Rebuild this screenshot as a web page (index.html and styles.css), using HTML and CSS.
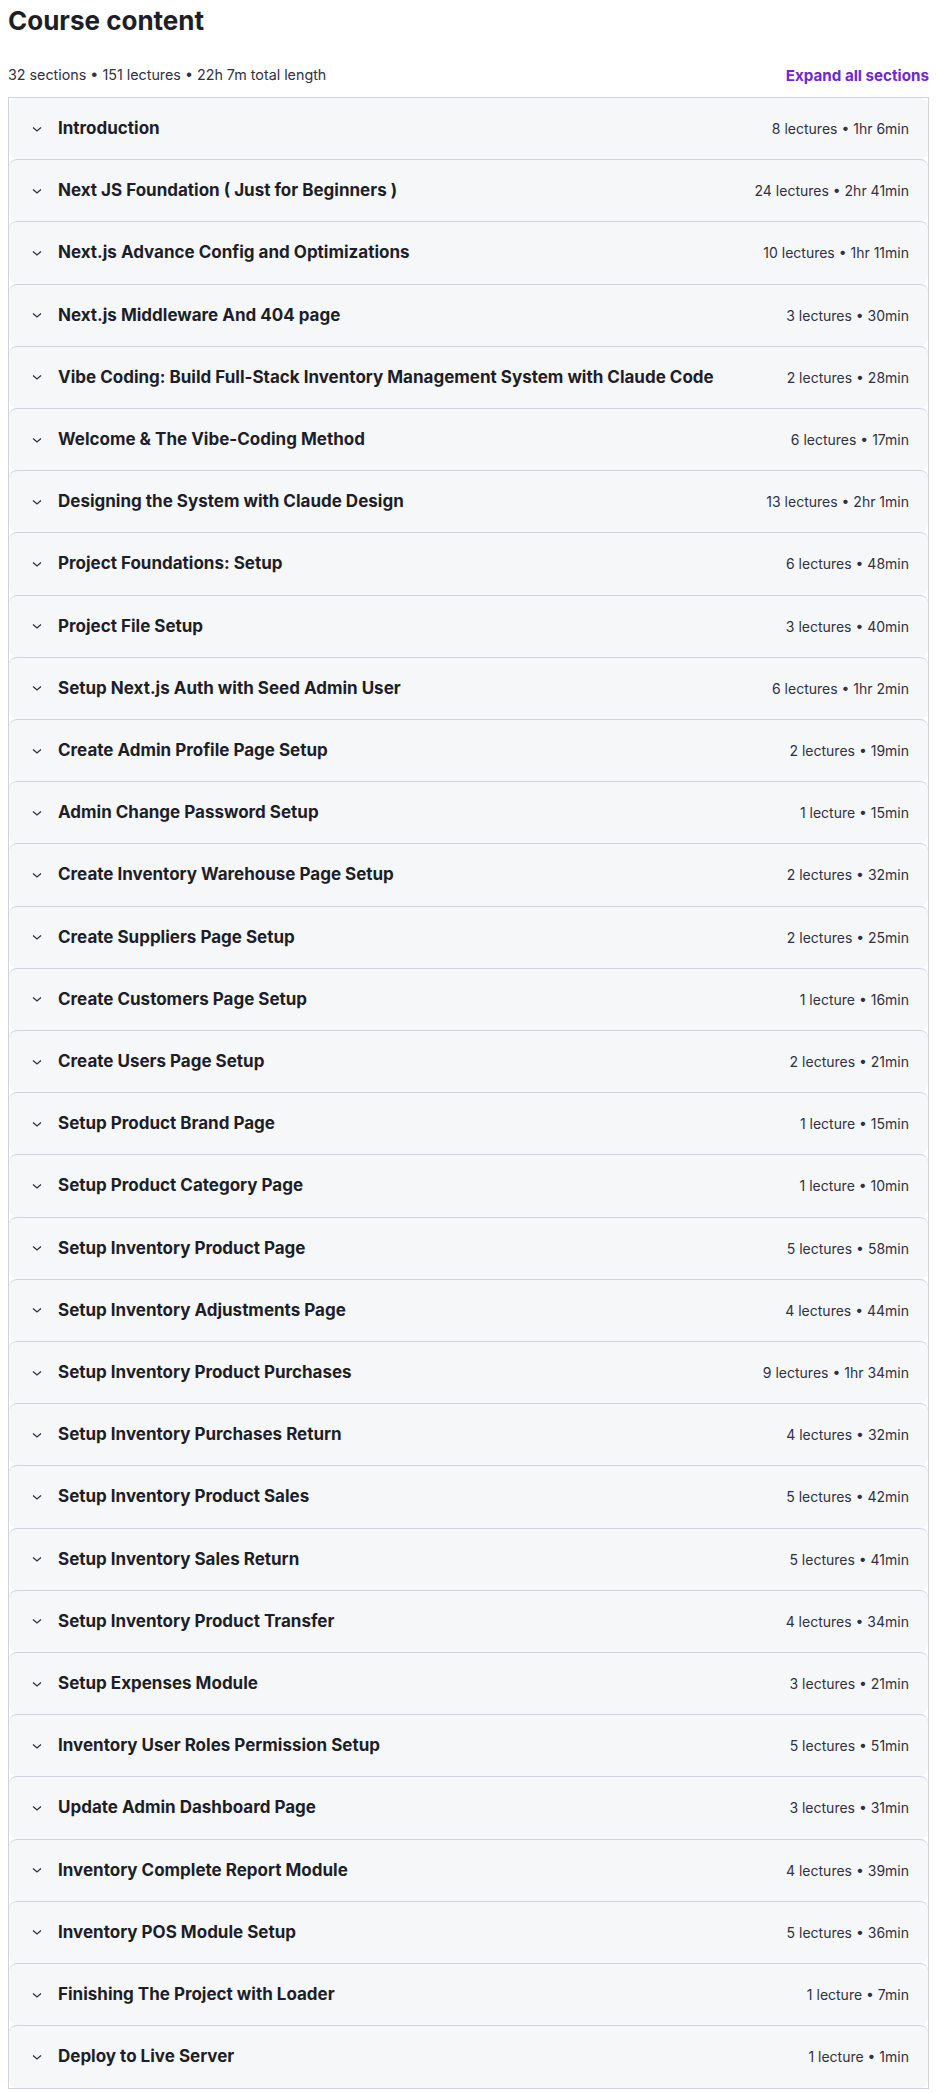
FILE: index.html
```html
<!DOCTYPE html>
<html>
<head>
    <title>Course content</title>
    <link rel="stylesheet" href="styles.css">
</head>
<body>
    <h2 class="heading">Course content</h2>
    <div class="meta-bar">
        <span class="meta">32 sections • 151 lectures • 22h 7m total length</span>
        <button class="expand-btn">Expand all sections</button>
    </div>

    <div class="sections" id="sections"></div>

    <script>
        const sections = [
            ['Introduction', '8 lectures • 1hr 6min'],
            ['Next JS Foundation ( Just for Beginners )', '24 lectures • 2hr 41min'],
            ['Next.js Advance Config and Optimizations', '10 lectures • 1hr 11min'],
            ['Next.js Middleware And 404 page', '3 lectures • 30min'],
            ['Vibe Coding: Build Full-Stack Inventory Management System with Claude Code', '2 lectures • 28min'],
            ['Welcome & The Vibe-Coding Method', '6 lectures • 17min'],
            ['Designing the System with Claude Design', '13 lectures • 2hr 1min'],
            ['Project Foundations: Setup', '6 lectures • 48min'],
            ['Project File Setup', '3 lectures • 40min'],
            ['Setup Next.js Auth with Seed Admin User', '6 lectures • 1hr 2min'],
            ['Create Admin Profile Page Setup', '2 lectures • 19min'],
            ['Admin Change Password Setup', '1 lecture • 15min'],
            ['Create Inventory Warehouse Page Setup', '2 lectures • 32min'],
            ['Create Suppliers Page Setup', '2 lectures • 25min'],
            ['Create Customers Page Setup', '1 lecture • 16min'],
            ['Create Users Page Setup', '2 lectures • 21min'],
            ['Setup Product Brand Page', '1 lecture • 15min'],
            ['Setup Product Category Page', '1 lecture • 10min'],
            ['Setup Inventory Product Page', '5 lectures • 58min'],
            ['Setup Inventory Adjustments Page', '4 lectures • 44min'],
            ['Setup Inventory Product Purchases', '9 lectures • 1hr 34min'],
            ['Setup Inventory Purchases Return', '4 lectures • 32min'],
            ['Setup Inventory Product Sales', '5 lectures • 42min'],
            ['Setup Inventory Sales Return', '5 lectures • 41min'],
            ['Setup Inventory Product Transfer', '4 lectures • 34min'],
            ['Setup Expenses Module', '3 lectures • 21min'],
            ['Inventory User Roles Permission Setup', '5 lectures • 51min'],
            ['Update Admin Dashboard Page', '3 lectures • 31min'],
            ['Inventory Complete Report Module', '4 lectures • 39min'],
            ['Inventory POS Module Setup', '5 lectures • 36min'],
            ['Finishing The Project with Loader', '1 lecture • 7min'],
            ['Deploy to Live Server', '1 lecture • 1min']
        ];

        const chevron = '<svg class="chevron" width="12" height="12" viewBox="0 0 12 12"><polyline points="2,4.5 6,8 10,4.5" fill="none" stroke="currentColor" stroke-width="1.3"/></svg>';

        const list = document.getElementById('sections');
        sections.forEach(function (s) {
            const row = document.createElement('div');
            row.className = 'section-row';
            row.innerHTML = '<div class="section-title">' + chevron + '<span>' + s[0].replace('&', '&amp;') + '</span></div>' +
                '<span class="section-info">' + s[1] + '</span>';
            list.appendChild(row);
        });
    </script>
</body>
</html>
```

FILE: styles.css
```css
body {
    font-family: Inter, "Liberation Sans", sans-serif;
    color: #2d2f31;
    background-color: #fff;
    margin: 8px;
}

.heading {
    font-size: 26px;
    font-weight: 700;
    color: #1d1e27;
    line-height: 1;
    margin: 0;
}

.meta-bar {
    display: flex;
    justify-content: space-between;
    align-items: center;
    margin-top: 31px;
    margin-bottom: 12px;
    height: 20px;
}

.meta {
    font-size: 14.3px;
    line-height: 20px;
    color: #303141;
}

.expand-btn {
    background: none;
    border: none;
    padding: 0;
    font-family: inherit;
    font-size: 15.2px;
    font-weight: 700;
    color: #6d28d2;
    cursor: pointer;
}

.sections {
    border: 1px solid #d1d2e0;
}

.section-row {
    display: flex;
    justify-content: space-between;
    align-items: center;
    padding: 20px 19px 20px 22px;
    line-height: 21.2px;
    background-color: #f6f7f9;
    border-top: 1px solid #d1d2e0;
    border-radius: 8px;
}

.section-row:first-child {
    border-top: none;
}

.section-title {
    display: flex;
    align-items: center;
    gap: 15px;
    font-size: 17px;
    font-weight: 700;
    color: #1d1e27;
}

.chevron {
    color: #303141;
}

.section-info {
    font-size: 14px;
    color: #303141;
}
```
